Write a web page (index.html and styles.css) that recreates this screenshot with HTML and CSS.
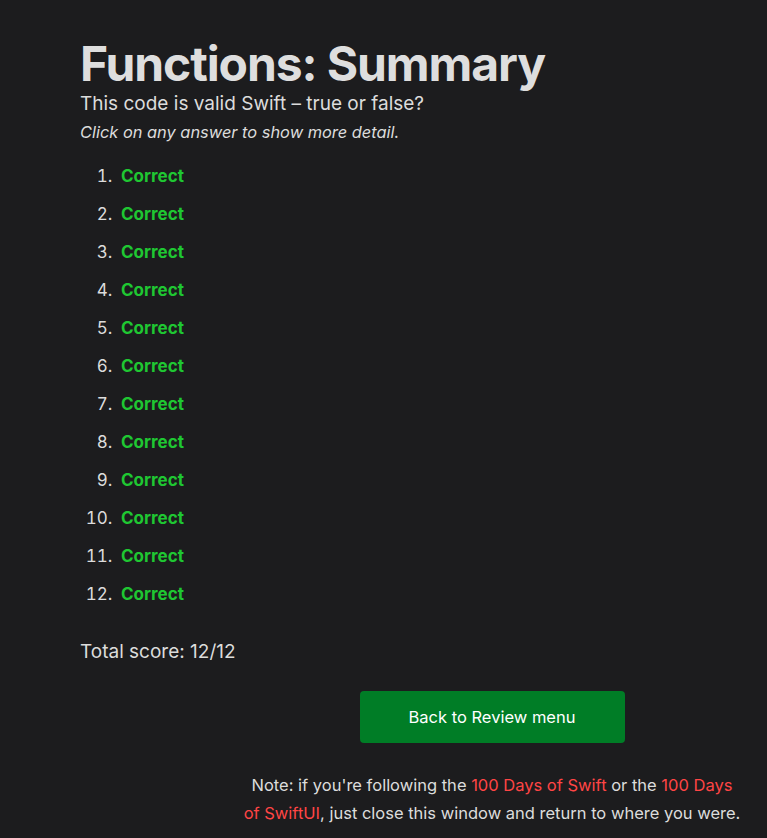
FILE: index.html
```html
<!DOCTYPE html>
<html>
<head>
<meta charset="utf-8">
<link rel="stylesheet" href="styles.css">
</head>
<body>
<main class="page">
  <h1 class="title">Functions: Summary</h1>
  <p class="subtitle">This code is valid Swift – true or false?</p>
  <p class="hint">Click on any answer to show more detail.</p>
  <ol class="answers">
    <li><span class="correct">Correct</span></li>
    <li><span class="correct">Correct</span></li>
    <li><span class="correct">Correct</span></li>
    <li><span class="correct">Correct</span></li>
    <li><span class="correct">Correct</span></li>
    <li><span class="correct">Correct</span></li>
    <li><span class="correct">Correct</span></li>
    <li><span class="correct">Correct</span></li>
    <li><span class="correct">Correct</span></li>
    <li><span class="correct">Correct</span></li>
    <li><span class="correct">Correct</span></li>
    <li><span class="correct">Correct</span></li>
  </ol>
  <p class="score">Total score: 12/12</p>
  <div class="footer">
    <a class="button" href="#">Back to Review menu</a>
    <p class="note">Note: if you're following the <a href="#">100 Days of Swift</a> or the <a href="#">100 Days of SwiftUI</a>, just close this window and return to where you were.</p>
  </div>
</main>
</body>
</html>
```
FILE: styles.css
```css
html, body {
  margin: 0;
  background: #1c1c1e;
}
body {
  font-family: Inter, "Noto Sans", sans-serif;
  color: #dcdcdc;
}
.page {
  padding: 36px 0 0 80px;
}
.title {
  font-size: 48px;
  font-weight: 700;
  line-height: 56px;
  margin: 0;
  color: #dedede;
  letter-spacing: -1.1px;
}
.subtitle {
  font-size: 19px;
  line-height: 24px;
  margin: 0;
}
.hint {
  font-size: 16.4px;
  font-style: italic;
  line-height: 24px;
  margin: 4px 0 0;
}
.answers {
  margin: 19px 0 0;
  padding-left: 37px;
  font-size: 17px;
}
.answers li {
  height: 38px;
  line-height: 26px;
  padding-left: 4px;
}
.answers li::marker {
  font-weight: 400;
}
.correct {
  color: #1fc732;
  font-weight: 700;
}
.score {
  font-size: 19px;
  line-height: 26px;
  margin: 0;
  padding-top: 20px;
}
.footer {
  width: 498px;
  margin: 26px 0 0 163px;
  display: flex;
  flex-direction: column;
  align-items: center;
}
.button {
  display: flex;
  align-items: center;
  justify-content: center;
  width: 265px;
  height: 52px;
  background: #007d26;
  color: #ffffff;
  border-radius: 4px;
  font-size: 16.5px;
  text-decoration: none;
}
.note {
  margin: 28px 0 0;
  font-size: 16.5px;
  line-height: 28px;
  text-align: center;
}
.note a {
  color: #ff4545;
  text-decoration: none;
}
```
